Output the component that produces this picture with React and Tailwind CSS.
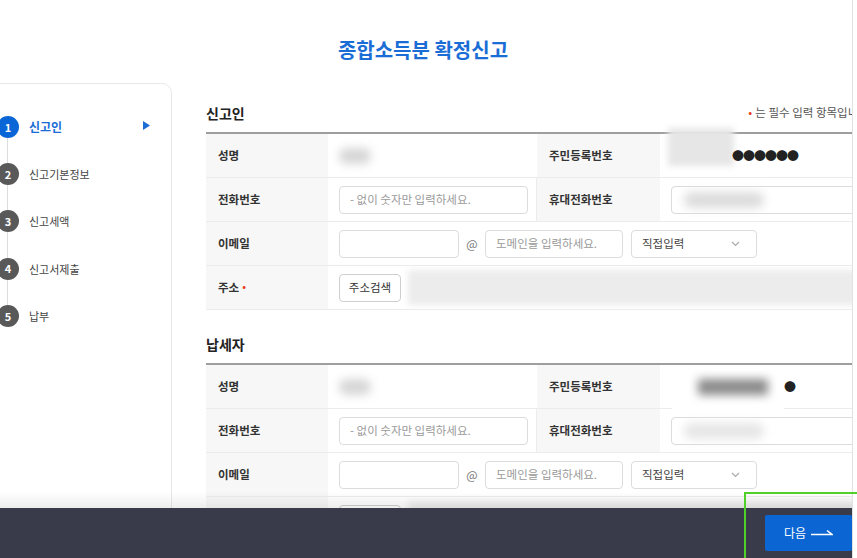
import React from "react";

const steps = ["신고인", "신고기본정보", "신고세액", "신고서제출", "납부"];

const Blur = ({ className }) => (
  <div className={"rounded-full blur-[5px] " + className} />
);

const Input = ({ placeholder = "", className = "" }) => (
  <div
    className={
      "flex h-[28px] items-center rounded-[4px] border border-[#dcdcdc] bg-white px-[10px] text-[11.5px] text-[#9a9a9a] " +
      className
    }
  >
    {placeholder}
  </div>
);

const Label = ({ children, req }) => (
  <div className="flex items-center bg-[#f7f7f7] pl-[12px] text-[11.5px] font-bold text-[#333]">
    {children}
    {req && <span className="ml-[3px] -mt-[4px] text-[10px] text-[#e8431b]">•</span>}
  </div>
);

const Cell = ({ children, className = "" }) => (
  <div className={"relative flex items-center pl-[11px] " + className}>
    {children}
  </div>
);

const EmailRow = () => (
  <>
    <Label>이메일</Label>
    <Cell className="col-span-3">
      <Input className="w-[120px]" />
      <span className="w-[26px] text-center text-[12px] text-[#777]">@</span>
      <Input className="w-[138px]" placeholder="도메인을 입력하세요." />
      <div className="ml-[8px] flex h-[28px] w-[126px] items-center justify-between rounded-[4px] border border-[#dcdcdc] bg-white px-[10px] text-[11.5px] text-[#444]">
        직접입력
        <svg width="9" height="6" viewBox="0 0 9 6" className="mr-[6px]">
          <path d="M1 1l3.5 3.5L8 1" stroke="#aaa" strokeWidth="1.2" fill="none" />
        </svg>
      </div>
    </Cell>
  </>
);

const Section = ({ title, second }) => (
  <div className="mb-[24px]">
    <div className="mb-[9px] flex h-[20px] items-center justify-between">
      <h2 className="text-[14px] font-bold text-[#222]">{title}</h2>
      {!second && (
        <p className="text-[11.5px] text-[#555]">
          <span className="mr-[3px] text-[#e8431b]">•</span>는 필수 입력 항목입니다.
        </p>
      )}
    </div>
    <div className="grid grid-cols-[122px_209px_123px_212px] grid-rows-[44px_44px_44px_44px] border-t-2 border-[#9e9e9e] [&>div]:border-b [&>div]:border-[#ececec]">
      <Label>성명</Label>
      <Cell>
        <Blur className="h-[16px] w-[32px] bg-[#d6d6d6]" />
      </Cell>
      <Label>주민등록번호</Label>
      <Cell>
        {second ? (
          <>
            <div className="absolute left-[12px] top-[0px] h-[86px] w-[112px] bg-white" />
            <Blur className="absolute left-[38px] top-[14px] h-[16px] w-[70px] rounded-none bg-[#8a8a8a]" />
            <span className="absolute left-[124px] text-[12px] text-[#222]">●</span>
          </>
        ) : (
          <>
            <div className="absolute left-[8px] top-[-6px] h-[38px] w-[66px] bg-[#e6e6e6] blur-[3px]" />
            <span className="relative ml-[61px] text-[12px] tracking-[-1px] text-[#222]">●●●●●●</span>
          </>
        )}
      </Cell>

      <Label>전화번호</Label>
      <Cell className="border-r border-r-[#ececec]">
        <Input className="w-[189px]" placeholder="- 없이 숫자만 입력하세요." />
      </Cell>
      <Label>휴대전화번호</Label>
      <Cell>
        <Input className="w-[200px]" />
        <Blur className={"absolute left-[24px] h-[16px] w-[80px] " + (second ? "bg-[#e6e6e6]" : "bg-[#dcdcdc]")} />
      </Cell>

      <EmailRow />

      <Label req>주소</Label>
      <Cell className="col-span-3">
        <div className="flex h-[28px] w-[62px] items-center justify-center rounded-[4px] border border-[#cfcfcf] bg-white text-[11.5px] text-[#333]">
          주소검색
        </div>
        <div className="ml-[7px] h-[35px] flex-1 bg-[#ececec] blur-[3px]" />
      </Cell>
    </div>
  </div>
);

export default function App() {
  return (
    <div className="relative h-[558px] w-[857px] overflow-hidden bg-white font-['Noto_Sans_CJK_KR',sans-serif]">
      <div className="relative h-full w-[853px] overflow-hidden border-r border-[#e2e2e2]">
        <h1 className="pt-[36px] pr-[6px] text-center text-[20px] font-bold leading-[28px] text-[#1b6dd6]">
          종합소득분 확정신고
        </h1>

        <div className="mt-[19px] flex">
          {/* steps */}
          <div className="ml-[-20px] h-[520px] w-[192px] shrink-0 rounded-[10px] border border-[#e8e8e8] pl-[16px] pt-[32px]">
            <div className="relative">
              <div className="absolute left-[10px] top-[11px] h-[188px] w-px bg-[#dddddd]" />
              {steps.map((s, i) => (
                <div key={s} className="relative flex h-[47.2px] items-start">
                  <div
                    className={
                      "flex h-[22px] w-[22px] items-center justify-center rounded-full text-[11px] font-bold text-white " +
                      (i === 0 ? "bg-[#0a66d6]" : "bg-[#595959]")
                    }
                  >
                    {i + 1}
                  </div>
                  <span
                    className={
                      "ml-[10px] leading-[22px] " +
                      (i === 0
                        ? "text-[12px] font-bold text-[#1b6dd6]"
                        : "text-[11px] text-[#444]")
                    }
                  >
                    {s}
                  </span>
                  {i === 0 && (
                    <svg width="7" height="9" viewBox="0 0 7 9" className="absolute left-[146px] top-[5px]">
                      <path d="M0 0L7 4.5L0 9Z" fill="#1b6dd6" />
                    </svg>
                  )}
                </div>
              ))}
            </div>
          </div>

          {/* form */}
          <div className="ml-[34px] w-[666px] shrink-0 pt-[20px]">
            <Section title="신고인" />
            <Section title="납세자" second />
          </div>
        </div>

        {/* bottom bar */}
        <div className="absolute bottom-[50px] left-0 h-[16px] w-full bg-gradient-to-b from-transparent to-black/[0.07]" />
        <div className="absolute bottom-0 left-0 flex h-[50px] w-full items-center justify-end bg-[#393a4a]">
          <button className="flex h-[36px] w-[87px] items-center justify-center gap-[5px] rounded-[2px] bg-[#0b66d3] text-[12px] text-white">
            다음
            <svg width="22" height="8" viewBox="0 0 22 8">
              <path d="M0 5.5H21L16 1.5" stroke="white" strokeWidth="1.6" fill="none" />
            </svg>
          </button>
        </div>
      </div>

      <div className="absolute bottom-0 left-[744px] h-[66px] w-[113px] border-2 border-b-0 border-r-0 border-[#4fd12a]" />
    </div>
  );
}
